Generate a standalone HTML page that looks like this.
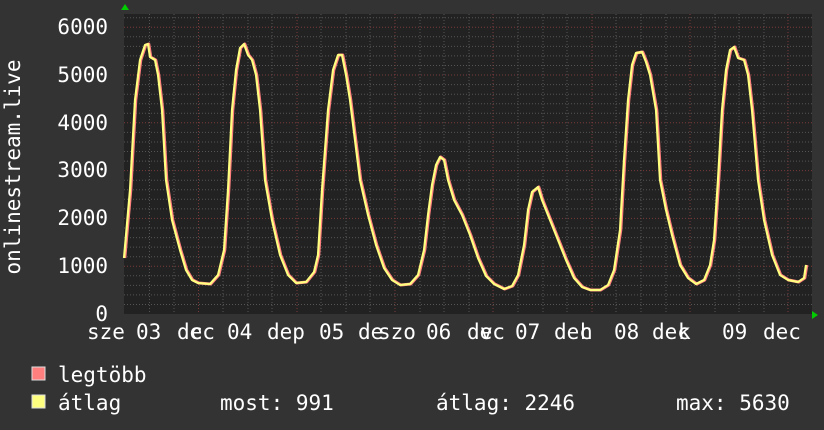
<!DOCTYPE html><html><head><style>body{margin:0;background:#333}svg{display:block}text{font-family:"DejaVu Sans Mono","Liberation Mono",monospace;fill:#fff;font-size:21px}</style></head><body>
<svg width="824" height="430" xmlns="http://www.w3.org/2000/svg">
<rect width="824" height="430" fill="#333"/>
<rect x="124" y="14" width="688" height="300" fill="#222"/>
<g stroke="#555" stroke-width="1" stroke-dasharray="1,2">
<path d="M124 304.5H812M124 294.9H812M124 285.4H812M124 275.8H812M124 256.7H812M124 247.1H812M124 237.6H812M124 228H812M124 208.9H812M124 199.3H812M124 189.8H812M124 180.2H812M124 161.1H812M124 151.5H812M124 142H812M124 132.4H812M124 113.3H812M124 103.7H812M124 94.2H812M124 84.6H812M124 65.5H812M124 55.9H812M124 46.4H812M124 36.8H812M124 17.7H812"/>
<path d="M149.5 14V314M174 14V314M223 14V314M248 14V314M272 14V314M321 14V314M346 14V314M370 14V314M420 14V314M444 14V314M469 14V314M518 14V314M543 14V314M567 14V314M616 14V314M641 14V314M666 14V314M715 14V314M739 14V314M764 14V314"/>
</g>
<g stroke="#7a3a3a" stroke-width="1" stroke-dasharray="1,2">
<path d="M124 266.2H812M124 218.4H812M124 170.6H812M124 122.8H812M124 75H812M124 27.2H812"/>
<path d="M198.5 14V314M297 14V314M395 14V314M493 14V314M592 14V314M690 14V314M788 14V314"/>
</g>
<polyline fill="none" stroke="#ff7f7f" stroke-width="3" stroke-linejoin="round" transform="translate(0.8,0)" points="124,258 130,190 135,100 140,60 145,45 148,44 150,57 155,60 158,75 162,110 166,180 172,220 180,250 186,270 192,280 198,283 210,284 218,275 224,250 228,190 232,110 236,70 240,48 244,44 248,55 252,60 256,75 260,110 265,180 272,220 280,255 288,275 296,283 306,282 314,272 318,255 322,190 328,110 333,70 338,55 342,55 346,75 350,100 355,140 360,180 368,215 376,245 384,268 392,280 400,285 410,284 418,275 424,250 428,215 432,185 436,165 440,157 444,160 448,180 454,200 462,215 470,235 478,258 486,276 494,284 504,289 512,286 518,275 524,245 528,210 532,192 538,187 542,200 548,215 556,235 566,260 574,278 582,287 590,290 600,290 608,285 614,270 620,230 624,160 628,100 632,65 636,53 642,52 646,62 650,75 656,110 660,180 666,210 672,235 680,265 688,278 696,284 704,280 710,265 714,240 718,180 722,110 726,70 730,50 734,47 738,58 744,60 748,75 752,110 758,180 764,220 772,255 780,275 788,280 798,282 804,278 806,265"/>
<polyline fill="none" stroke="#ffff80" stroke-width="2.2" stroke-linejoin="round" points="124,258 130,190 135,100 140,60 145,45 148,44 150,57 155,60 158,75 162,110 166,180 172,220 180,250 186,270 192,280 198,283 210,284 218,275 224,250 228,190 232,110 236,70 240,48 244,44 248,55 252,60 256,75 260,110 265,180 272,220 280,255 288,275 296,283 306,282 314,272 318,255 322,190 328,110 333,70 338,55 342,55 346,75 350,100 355,140 360,180 368,215 376,245 384,268 392,280 400,285 410,284 418,275 424,250 428,215 432,185 436,165 440,157 444,160 448,180 454,200 462,215 470,235 478,258 486,276 494,284 504,289 512,286 518,275 524,245 528,210 532,192 538,187 542,200 548,215 556,235 566,260 574,278 582,287 590,290 600,290 608,285 614,270 620,230 624,160 628,100 632,65 636,53 642,52 646,62 650,75 656,110 660,180 666,210 672,235 680,265 688,278 696,284 704,280 710,265 714,240 718,180 722,110 726,70 730,50 734,47 738,58 744,60 748,75 752,110 758,180 764,220 772,255 780,275 788,280 798,282 804,278 806,265"/>
<path d="M121 10l4-6 4 6z" fill="#0c0"/>
<path d="M812 311l6 4-6 4z" fill="#0c0"/>
<g text-anchor="end">
<text x="108" y="34">6000</text><text x="108" y="82">5000</text><text x="108" y="130">4000</text><text x="108" y="177">3000</text><text x="108" y="225">2000</text><text x="108" y="273">1000</text><text x="108" y="321">0</text>
</g>
<text transform="translate(20,167) rotate(-90)" text-anchor="middle">onlinestream.live</text>
<g>
<text x="87" y="339">sze</text><text x="136" y="339">03</text><text x="177" y="339">dec</text><text x="190" y="339">c</text>
<text x="227" y="339">04</text><text x="267" y="339">dep</text>
<text x="319" y="339">05</text><text x="358" y="339">de</text><text x="378" y="339">szo</text>
<text x="426" y="339">06</text><text x="467" y="339">dec</text><text x="480" y="339">v</text>
<text x="515" y="339">07</text><text x="554" y="339">dec</text><text x="580" y="339">h</text>
<text x="614" y="339">08</text><text x="652" y="339">dec</text><text x="678" y="339">k</text>
<text x="722" y="339">09</text><text x="763" y="339">dec</text>
</g>
<rect x="32" y="367" width="13" height="13" fill="#ff7f7f" stroke="#ddd"/>
<rect x="32" y="395" width="13" height="13" fill="#ffff80" stroke="#ddd"/>
<text x="58" y="382">legtöbb</text>
<text x="58" y="410">átlag</text>
<text x="220" y="410">most: 991</text>
<text x="436" y="410">átlag: 2246</text>
<text x="676" y="410">max: 5630</text>
</svg></body></html>
